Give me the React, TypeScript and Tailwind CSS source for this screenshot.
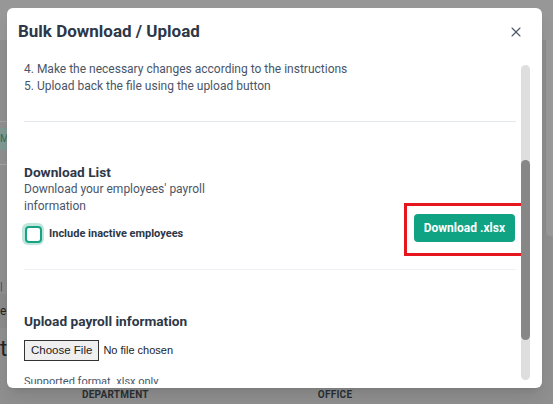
import { X } from "lucide-react";

function Backdrop() {
  return (
    <div className="flex h-full flex-col bg-[#8f8f8f]">
      {/* dimmed page behind the modal */}
      <div className="h-[40px] shrink-0 bg-[#979797]" />
      <div className="flex flex-1">
        <div className="flex w-[8px] flex-col pt-[81px]">
          <div className="h-px bg-[#a3a3a3]" />
          <div className="mt-[6px] h-[22px] bg-[#7f9a93] text-[10px] leading-[22px] text-[#2f6f60]">M</div>
          <div className="mt-[14px] h-px bg-[#a3a3a3]" />
          <div className="mt-[115px] text-[11px] leading-[14px] text-[#3b4a6b]">|</div>
          <div className="h-[34px] bg-[#8a8a8a] text-[12px] leading-[34px] text-[#222]">e</div>
          <div className="mt-[10px] text-[22px] leading-none text-[#222]">t</div>
        </div>
        <div className="flex-1" />
        <div className="h-[196px] w-[8px] rounded-bl border-l border-[#8a8a8a] bg-[#999]" />
      </div>
      <div className="flex h-[16px] shrink-0 gap-[169px] pl-[82px] text-[10px] font-bold leading-[14px] tracking-wide text-[#2a2f36]">
        <span>DEPARTMENT</span>
        <span>OFFICE</span>
      </div>
    </div>
  );
}

function Checkbox() {
  return (
    <span className="-ml-[2px] flex h-[22px] w-[22px] items-center justify-center rounded-[6px] bg-[#bfe6dc]">
      <span className="h-[17px] w-[17px] rounded-[4px] border-2 border-[#17a383] bg-white" />
    </span>
  );
}

export default function App() {
  return (
    <div
      className="relative h-[404px] w-[553px] overflow-hidden"
      style={{ fontFamily: "Roboto, 'Liberation Sans', sans-serif" }}
    >
      <Backdrop />

      <div className="absolute left-[7px] top-[8px] flex h-[380px] w-[535px] flex-col rounded-md bg-white shadow-lg">
        <div className="flex h-[48px] shrink-0 items-center justify-between pl-[11px] pr-[18px]">
          <h2 className="text-[17px] font-bold text-[#2d3748]">Bulk Download / Upload</h2>
          <X className="h-[16px] w-[16px] text-[#4a5568]" strokeWidth={1.6} />
        </div>

        <div className="relative flex-1 overflow-hidden pb-[4px]">
          <div className="h-full overflow-hidden pl-[17px] pr-[26px]">
            <div className="pt-[5px] text-[12px] leading-[17px] text-[#4a5568]">
              <p>4. Make the necessary changes according to the instructions</p>
              <p>5. Upload back the file using the upload button</p>
            </div>
            <div className="mt-[26px] h-px bg-[#e2e8f0]" />

            <div className="flex items-end justify-between pt-[41px] pb-[24px]">
              <div>
                <h3 className="text-[13.7px] font-bold leading-[18px] text-[#2d3748]">Download List</h3>
                <p className="w-[196px] text-[12px] leading-[17px] text-[#4a5568]">
                  Download your employees' payroll information
                </p>
                <label className="mt-[8px] flex items-center gap-[5px]">
                  <Checkbox />
                  <span className="text-[11px] font-bold text-[#2d3748]">Include inactive employees</span>
                </label>
              </div>
              <div className="mb-[-11px] mr-[-9px] border-[3px] border-[#e5161d] px-[7px] pt-[8px] pb-[11px]">
                <button className="h-[28px] rounded bg-[#0fa383] px-[10px] text-[12px] font-bold text-white">
                  Download .xlsx
                </button>
              </div>
            </div>

            <div className="h-px bg-[#edf0f4]" />

            <h3 className="pt-[42px] text-[13.7px] font-bold leading-[18px] text-[#2d3748]">
              Upload payroll information
            </h3>
            <input
              type="file"
              className="mt-[10px] text-[11px] text-[#222] file:mr-[4px] file:border file:border-[#333] file:bg-[#efefef] file:px-[6px] file:py-[1px] file:text-[11.5px]"
              style={{ fontFamily: "'Liberation Sans', Arial, sans-serif" }}
            />
            <p className="mt-[13px] text-[11px] text-[#4a5568]">Supported format .xlsx only</p>
          </div>

          {/* scrollbar */}
          <div className="absolute right-[12px] top-[9px] h-[315px] w-[9px] rounded-full bg-[#dedede]">
            <div className="mt-[95px] h-[180px] w-[9px] rounded-full bg-[#878787]" />
          </div>
        </div>
      </div>
    </div>
  );
}
